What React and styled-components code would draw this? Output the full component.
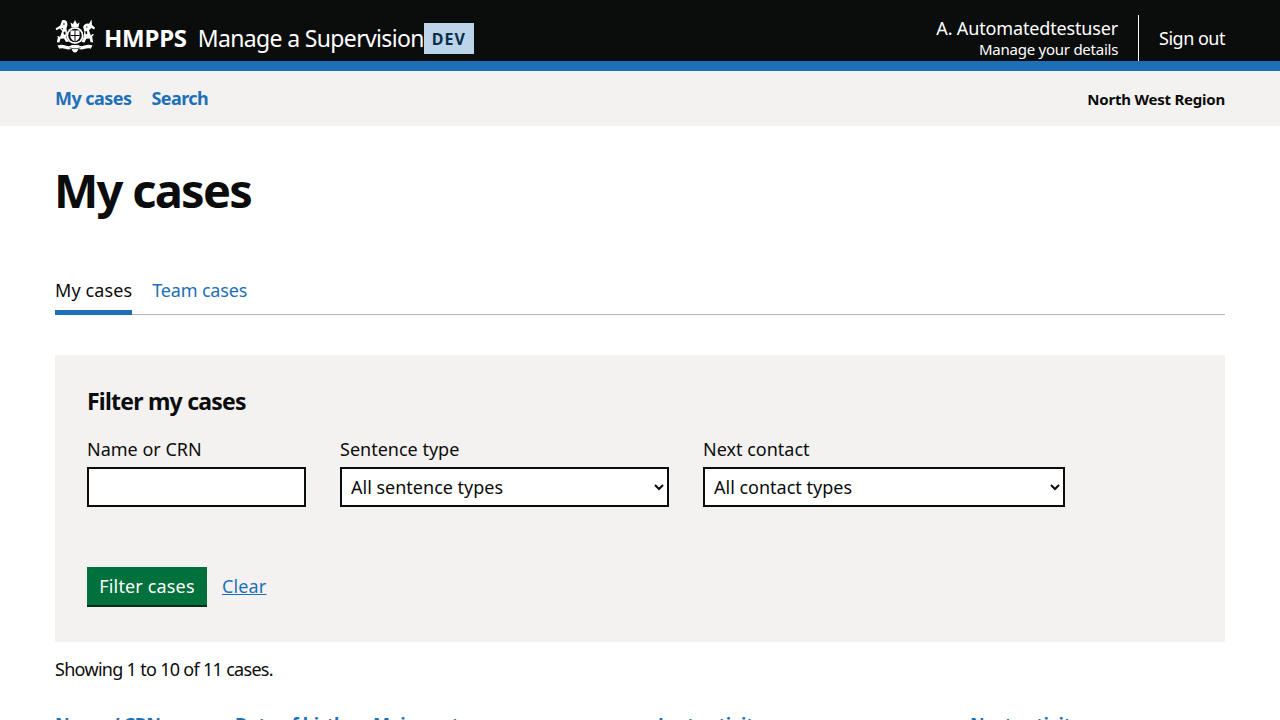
import React from 'react';
import styled, { createGlobalStyle } from 'styled-components';

const Global = createGlobalStyle`
  html, body { margin: 0; padding: 0; background: #fff; }
  body { font-family: "Noto Sans", "Liberation Sans", sans-serif; color: #0b0c0c; }
  #root { height: 720px; overflow: hidden; }
  * { box-sizing: border-box; }
`;

const Header = styled.header`
  background: #0b0c0c;
  border-bottom: 10px solid #1d70b8;
  height: 71px;
  padding: 0 55px;
  display: flex;
  justify-content: space-between;
  color: #fff;
`;
const Brand = styled.div`
  display: flex;
  align-items: flex-start;
  padding-top: 18px;
`;
const Crest = styled.svg`
  width: 40px;
  height: 34px;
  margin-top: 1px;
`;
const Org = styled.span`
  font-size: 24px;
  line-height: 40px;
  font-weight: 700;
  margin-left: 9px;
  letter-spacing: -0.25px;
`;
const Service = styled.span`
  font-size: 23px;
  line-height: 40px;
  margin-left: 11px;
  letter-spacing: -0.65px;
`;
const Phase = styled.span`
  background: #bbd4ea;
  color: #0c2d4a;
  font-size: 16px;
  font-weight: 700;
  letter-spacing: 1px;
  width: 50px;
  height: 31px;
  margin-top: 5px;
  display: flex;
  align-items: center;
  justify-content: center;
`;
const Account = styled.div`
  display: flex;
  align-items: stretch;
  padding-top: 15px;
`;
const User = styled.div`
  text-align: right;
  padding-right: 20px;
  border-right: 1px solid #fff;
`;
const UserName = styled.div`
  font-size: 18px;
  line-height: 26px;
  letter-spacing: -0.15px;
`;
const UserLink = styled.div`
  font-size: 15px;
  line-height: 18px;
  margin-top: -1px;
  letter-spacing: -0.25px;
`;
const SignOut = styled.div`
  font-size: 18px;
  line-height: 47px;
  padding-left: 20px;
  letter-spacing: -0.5px;
`;

const SubNav = styled.nav`
  background: #f3f2f1;
  height: 55px;
  padding: 0 55px;
  display: flex;
  justify-content: space-between;
  align-items: center;
`;
const NavLinks = styled.div`
  display: flex;
  gap: 20px;
  padding-bottom: 2px;
`;
const NavLink = styled.a`
  font-size: 18px;
  font-weight: 700;
  color: #1d70b8;
  letter-spacing: -0.55px;
`;
const Region = styled.span`
  font-size: 15px;
  font-weight: 700;
  letter-spacing: -0.22px;
`;

const Main = styled.main`
  padding: 0 55px;
`;
const Title = styled.h1`
  font-size: 47px;
  line-height: 50px;
  font-weight: 700;
  margin: 39px 0 0 -1px;
  letter-spacing: -1.75px;
`;
const Tabs = styled.div`
  display: flex;
  gap: 20px;
  margin-top: 61px;
  border-bottom: 1px solid #b1b4b6;
  height: 39px;
`;
const Tab = styled.a`
  font-size: 18px;
  line-height: 26px;
  height: 39px;
  padding-top: 1px;
  letter-spacing: ${p => (p.$active ? '0.1px' : '-0.15px')};
  color: ${p => (p.$active ? '#0b0c0c' : '#1d70b8')};
  border-bottom: ${p => (p.$active ? '5px solid #1d70b8' : '0')};
`;
const FilterBox = styled.section`
  background: #f3f2f1;
  margin-top: 40px;
  height: 287px;
  padding: 31px 32px 32px;
`;
const FilterTitle = styled.h2`
  font-size: 23px;
  line-height: 30px;
  font-weight: 700;
  margin: 0;
  letter-spacing: -0.77px;
`;
const Fields = styled.div`
  display: flex;
  gap: 34px;
  margin-top: 21px;
`;
const Field = styled.label`
  display: flex;
  flex-direction: column;
  width: ${p => p.$w}px;
  font-size: 18px;
  line-height: 25px;
`;
const TextInput = styled.input`
  height: 40px;
  margin-top: 5px;
  border: 2px solid #0b0c0c;
  background: #fff;
  border-radius: 0;
  padding: 5px;
  font: inherit;
`;
const Select = styled.select`
  height: 40px;
  margin-top: 5px;
  border: 2px solid #0b0c0c;
  background: #fff;
  color: #0b0c0c;
  border-radius: 0;
  padding: 5px;
  font: inherit;
`;
const Actions = styled.div`
  display: flex;
  align-items: center;
  gap: 15px;
  margin-top: 60px;
`;
const Button = styled.button`
  background: #00703c;
  color: #fff;
  border: 0;
  box-shadow: 0 2px 0 #002d18;
  width: 120px;
  height: 38px;
  margin-bottom: 2px;
  padding: 0;
  font: inherit;
  font-size: 18px;
  letter-spacing: 0.15px;
`;
const ClearLink = styled.a`
  font-size: 18px;
  color: #1d70b8;
  text-decoration: underline;
  margin-bottom: 2px;
  letter-spacing: 0.15px;
`;
const Summary = styled.p`
  font-size: 18px;
  line-height: 25px;
  margin: 15px 0 0;
  letter-spacing: -0.7px;
`;
const Table = styled.table`
  border-collapse: collapse;
  table-layout: fixed;
  width: 100%;
  margin-top: 30px;
`;
const Th = styled.th`
  width: ${p => p.$w}px;
  padding: 0;
  text-align: left;
  font-size: 18px;
  line-height: 25px;
  font-weight: 700;
  color: #1d70b8;
  white-space: nowrap;
  letter-spacing: -0.3px;
`;
const Sort = styled.svg`
  width: 8px;
  height: 12px;
  margin-left: 1px;
  vertical-align: -1px;
`;

const SortIcon = () => (
  <Sort viewBox="0 0 12 18">
    <path d="M6 1 10 7H2zM6 17 2 11h8z" fill="#1d70b8" />
  </Sort>
);

const CrestIcon = () => (
  <Crest viewBox="0 0 40 34" fill="#fff">
    {/* crown */}
    <path d="M16.500 8 15.500 3.500 18 5l2-4 2 4 2.500-1.500L23.500 8z" />
    {/* garter and shield */}
    <circle cx="20" cy="16.500" r="8.500" />
    <circle cx="20" cy="16.500" r="6.800" fill="#0b0c0c" />
    <path d="M15.500 11.500h9v6c0 2.500-2.200 4-4.500 5-2.300-1-4.500-2.500-4.500-5z" />
    <path d="M19.500 11.500h1v11h-1zM15.500 16h9v1h-9z" fill="#0b0c0c" />
    {/* lion */}
    <path d="M7 1.500c2.500-1 4.800 0 5.200 2.200.5 2.200 0 3.800-.8 5.300l.6 4.500-.6 5.500 2.600 3.500-3 .6-2-3.600-3.600.2-1 3.800-2.600-.2 1.200-5.600L1.500 17.500l1.800-.6 1.700 1L7.200 12 4.800 9.400 1.400 11.300.5 9.500l4.700-3z" />
    <path d="M8 4.500h1.800v1H8zM6.500 9.500l1-.6.800 1-1 .6zM8.500 13l1.800-.5.400 2.800-1.700.5z" fill="#0b0c0c" />
    {/* unicorn */}
    <path d="M36.500.500 34 4.800l-2-.4c-2.200.5-3.700 2-3.800 4l1.200 4-.9 6-2 4.600 3 .5 1.700-3.800 3.400-.2 1 3.800 2.500-.1-1-5.600 2-2.100-1.500-.4-1.800 1.400-1.800-5.200 2.400-2.300 2.900 1.400.6-1.800-2.900-2.500z" />
    <path d="M31 7.500h1.500v1H31zM30.200 12.500l1.700-.4.400 2.800-1.600.4z" fill="#0b0c0c" />
    {/* motto ribbon */}
    <path d="M2.500 26.500c3.200-1.200 5.500-.6 8 .1 3 1 5.500.6 6-.6h7c.6 1.200 3 1.600 6 .6 2.500-.7 4.800-1.300 8-.1l-1.800 3.200c-2.500-.8-4.200-.4-5.700.1-2.500.8-5 1-6.500 0-1.200 2.900-1.800 3.700-3.500 3.700s-2.300-.8-3.500-3.700c-1.500 1-4 .8-6.500 0-1.500-.5-3.200-.9-5.700-.1z" />
    <path d="M14.500 28.800c3 1.200 8 1.200 11 0" fill="none" stroke="#0b0c0c" strokeWidth=".7" />
  </Crest>
);

export default function App() {
  return (
    <>
      <Global />
      <Header>
        <Brand>
          <CrestIcon />
          <Org>HMPPS</Org>
          <Service>Manage a Supervision</Service>
          <Phase>DEV</Phase>
        </Brand>
        <Account>
          <User>
            <UserName>A. Automatedtestuser</UserName>
            <UserLink>Manage your details</UserLink>
          </User>
          <SignOut>Sign out</SignOut>
        </Account>
      </Header>
      <SubNav>
        <NavLinks>
          <NavLink>My cases</NavLink>
          <NavLink>Search</NavLink>
        </NavLinks>
        <Region>North West Region</Region>
      </SubNav>
      <Main>
        <Title>My cases</Title>
        <Tabs>
          <Tab $active>My cases</Tab>
          <Tab>Team cases</Tab>
        </Tabs>
        <FilterBox>
          <FilterTitle>Filter my cases</FilterTitle>
          <Fields>
            <Field $w={219}>
              Name or CRN
              <TextInput type="text" />
            </Field>
            <Field $w={329}>
              Sentence type
              <Select defaultValue="all"><option value="all">All sentence types</option></Select>
            </Field>
            <Field $w={362}>
              Next contact
              <Select defaultValue="all"><option value="all">All contact types</option></Select>
            </Field>
          </Fields>
          <Actions>
            <Button>Filter cases</Button>
            <ClearLink>Clear</ClearLink>
          </Actions>
        </FilterBox>
        <Summary>Showing 1 to 10 of 11 cases.</Summary>
        <Table>
          <thead>
            <tr>
              <Th $w={180}>Name / CRN<SortIcon /></Th>
              <Th $w={138}>Date of birth<SortIcon /></Th>
              <Th $w={285}>Main sentence<SortIcon /></Th>
              <Th $w={312}>Last activity<SortIcon /></Th>
              <Th $w={255}>Next activity<SortIcon /></Th>
            </tr>
          </thead>
        </Table>
      </Main>
    </>
  );
}
